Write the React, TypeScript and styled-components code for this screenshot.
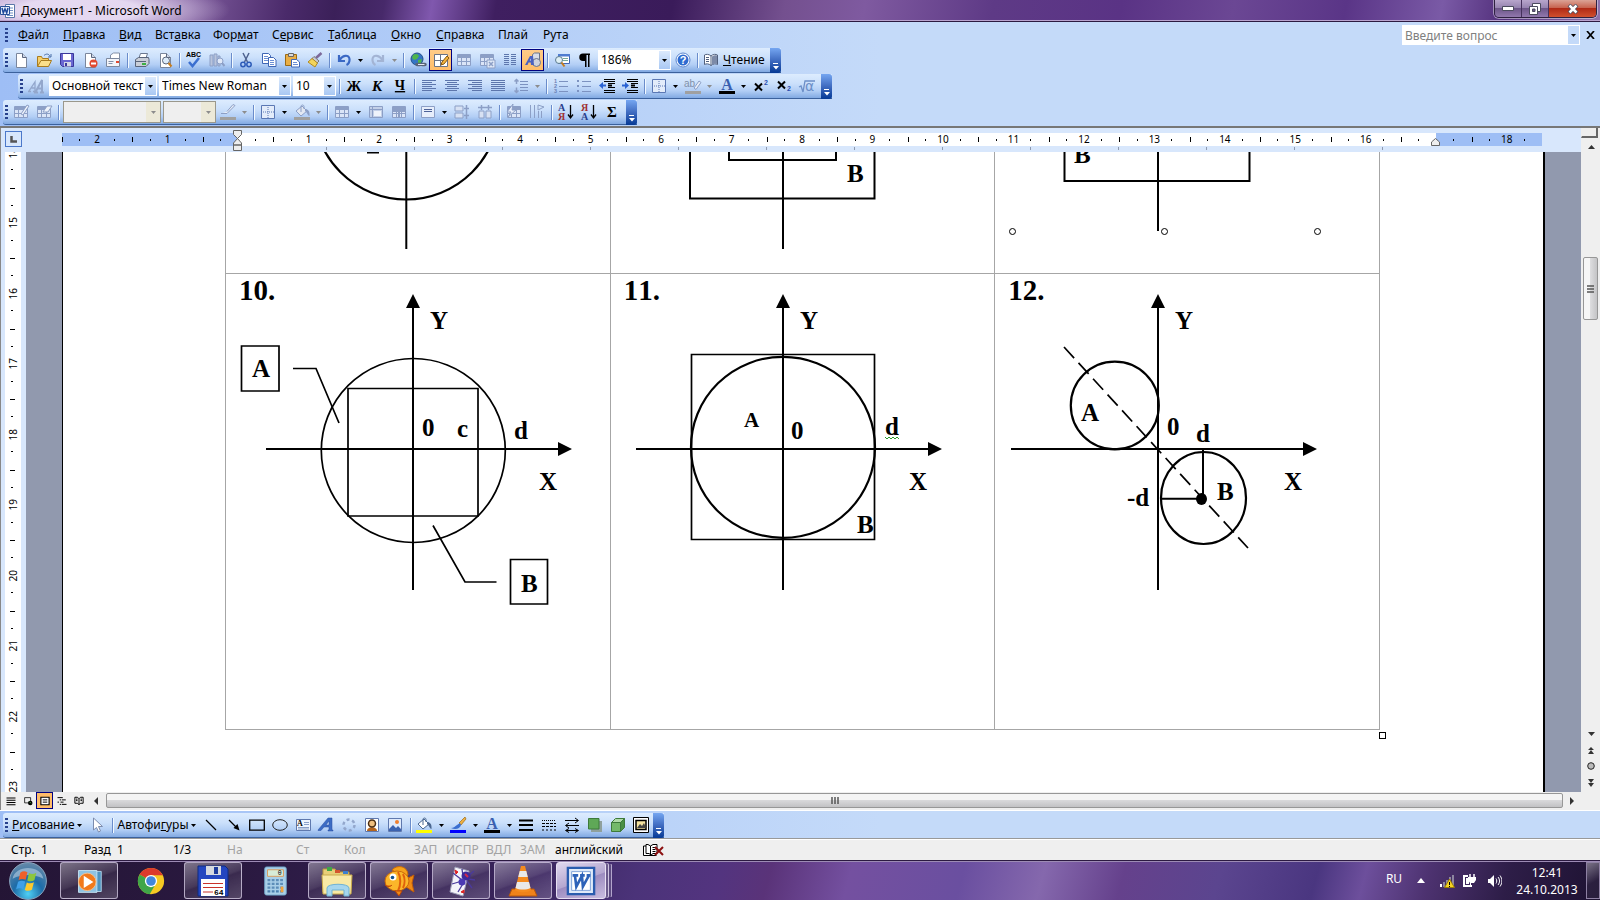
import React from 'react';
import styled, { createGlobalStyle, css } from 'styled-components';

const ui = '"Noto Sans", "Open Sans", sans-serif';

const Global = createGlobalStyle`
  * { box-sizing: border-box; }
  html, body, #root { height: 100%; }
  body { margin: 0; overflow: hidden; font: 12px/16px ${ui}; color: #000; background: #c4daf9; }
  button, select, input { font: inherit; color: inherit; margin: 0; padding: 0; border: 0; background: none; border-radius: 0; }
  svg { display: block; flex: none; }
`;

/* ---------- window frame ---------- */

const Window = styled.div`
  height: 100vh;
  display: flex;
  flex-direction: column;
`;

const TitleBar = styled.header`
  flex: none;
  height: 22px;
  display: flex;
  align-items: flex-start;
  padding-right: 3px;
  border-bottom: 1px solid #2c1a41;
  box-shadow: inset 0 -1px 0 #b9a3cf;
  background:
    radial-gradient(ellipse 150px 30px at 80px 10px, rgba(238, 228, 248, 0.9) 40%, rgba(238, 228, 248, 0) 100%),
    linear-gradient(100deg, #a284bd 0%, #7d5a9c 12%, #4a2a6a 18%, #3b2059 21%, #47296a 24%, #8058ae 27%, #3f1f60 31%, #3a1b5a 42%, #74508f 49%, #7f5aa0 54%, #5e3a86 62%, #5a3385 70%, #6b4794 77%, #5a3587 84%, #7a5aa6 90%, #53307c 94%, #8d74ae 100%);
`;

const Title = styled.h1`
  flex: 1;
  display: flex;
  align-items: center;
  gap: 5px;
  height: 21px;
  margin: 0;
  font-size: 12px;
  line-height: 20px;
  font-weight: 400;
`;

const CaptionGroup = styled.div`
  display: flex;
  height: 18px;
  border: 1px solid #2e2140;
  border-top: 0;
  border-radius: 0 0 5px 5px;
  overflow: hidden;
  box-shadow: 0 0 0 1px rgba(255, 255, 255, 0.45);
`;

const CaptionButton = styled.button<{ $close?: boolean }>`
  width: ${(p) => (p.$close ? 47 : 27)}px;
  display: grid;
  place-items: center;
  border-right: ${(p) => (p.$close ? 0 : '1px solid #45315c')};
  background: ${(p) =>
    p.$close
      ? 'linear-gradient(#dba396, #c76450 45%, #b02a16 50%, #d0502e 100%)'
      : 'linear-gradient(#b8a6cc, #9683b0 45%, #6d5689 50%, #9178ad 100%)'};
`;

/* ---------- menus and toolbars ---------- */

const CommandArea = styled.div`
  flex: none;
  background: linear-gradient(90deg, #9ebef5 0%, #c4daf9 55%);
  border-bottom: 2px solid #777;
`;

const MenuBar = styled.nav`
  display: flex;
  align-items: center;
  height: 26px;
  padding-left: 3px;
`;

const MenuItem = styled.button<{ $w: number }>`
  width: ${(p) => p.$w}px;
  height: 22px;
  text-align: left;
  white-space: nowrap;
`;

const Spacer = styled.div`
  flex: 1;
`;

const Grip = styled.span<{ $gap?: number }>`
  flex: none;
  width: 3px;
  height: 14px;
  margin: 0 ${(p) => p.$gap ?? 1}px 0 2px;
  background: repeating-linear-gradient(#27418d 0 2px, transparent 2px 4px);
`;

const ToolRow = styled.div<{ $indent?: boolean }>`
  display: flex;
  height: 26px;
  padding-left: ${(p) => (p.$indent ? 18 : 3)}px;
`;

const Bar = styled.div`
  display: flex;
  align-items: center;
  height: 25px;
  border-radius: 3px 0 0 3px;
  border-bottom: 1px solid #3b619c;
  background: linear-gradient(#ddecfe 0%, #cbe0fb 40%, #b2cef5 70%, #81a9e2 100%);
`;

const BarCap = styled.button<{ $gap: number }>`
  align-self: stretch;
  width: 11px;
  margin: 0 0 -1px ${(p) => p.$gap}px;
  border-radius: 0 3px 3px 0;
  display: grid;
  place-items: end center;
  padding-bottom: 3px;
  background: linear-gradient(#75a6f1, #3f6bc0 50%, #053995);
`;

const Tool = styled.button<{ $on?: boolean }>`
  flex: none;
  width: 23px;
  height: 22px;
  display: grid;
  place-items: center;
  ${(p) =>
    p.$on &&
    css`
      border: 1px solid #000080;
      background: linear-gradient(#fecb88, #ffbd69);
    `}
`;

const CloseDoc = styled.button`
  width: 20px;
  height: 20px;
  display: grid;
  place-items: center;
`;

const Drop = styled.button`
  flex: none;
  width: 11px;
  height: 22px;
  display: grid;
  place-items: center;
`;

const Sep = styled.span`
  flex: none;
  width: 6px;
  height: 15px;
  background: linear-gradient(90deg, transparent 3px, #6a8ccb 3px 4px, #f1f9ff 4px 5px, transparent 5px);
`;

const TextTool = styled.button<{ $menu?: boolean }>`
  display: flex;
  align-items: center;
  gap: ${(p) => (p.$menu ? 2 : 4)}px;
  height: 22px;
  padding: 0 ${(p) => (p.$menu ? 4 : 5)}px 0 3px;
  white-space: nowrap;
`;

const Combo = styled.label<{ $w: number; $off?: boolean }>`
  flex: none;
  width: ${(p) => p.$w}px;
  height: ${(p) => (p.$off ? 22 : 20)}px;
  margin-left: 2px;
  display: grid;
  align-items: center;
  background: ${(p) => (p.$off ? '#efefef' : '#fff')};
  border: ${(p) => (p.$off ? '1px solid #9a988c' : '0')};
  > * { grid-area: 1 / 1; }
  select { appearance: none; width: 100%; height: 18px; padding-left: 3px; outline: 0; opacity: 1; }
`;

const ComboArrow = styled.span<{ $off?: boolean }>`
  justify-self: end;
  width: ${(p) => (p.$off ? 14 : 11)}px;
  height: ${(p) => (p.$off ? 20 : 18)}px;
  margin-right: ${(p) => (p.$off ? 0 : 1)}px;
  display: grid;
  place-items: center;
  pointer-events: none;
  background: ${(p) => (p.$off ? '#ece9d8' : 'linear-gradient(#dceafd, #a9c8f3)')};
`;

const AskBox = styled.div`
  display: flex;
  align-items: center;
  width: 178px;
  height: 20px;
  padding-right: 1px;
  background: #fff;
  input { flex: 1; min-width: 0; height: 20px; padding-left: 3px; outline: 0; }
  input::placeholder { color: #808080; opacity: 1; }
  button { width: 11px; height: 18px; display: grid; place-items: center; background: #c4daf9; }
`;

/* ---------- rulers and document ---------- */

const Workspace = styled.main`
  flex: 1;
  min-height: 0;
  display: grid;
  grid-template-columns: 25px minmax(0, 1fr) 19px;
  grid-template-rows: 24px minmax(0, 1fr) 18px;
  border-left: 1px solid #888;
  background: #d8e7fc;
`;

const TabKind = styled.button`
  align-self: start;
  width: 17px;
  height: 16px;
  margin: 3px 0 0 4px;
  display: grid;
  place-items: center;
  border: 1px solid #4b78ca;
`;

const HRuler = styled.div`
  padding: 5px 39px 0 36px;
  overflow: hidden;
`;

const HScale = styled.div`
  display: grid;
  grid-template-columns: repeat(21, minmax(0, 1fr));
  height: 13px;
  background: linear-gradient(90deg, #9ebef5 11.9%, #fff 11.9% 92.85%, #9ebef5 92.85%);
  position: relative;
`;

const HCell = styled.span`
  display: flex;
  align-items: center;
  justify-content: center;
  font-size: 10px;
  line-height: 13px;
  background:
    linear-gradient(#000, #000) 25% 6px / 1px 2px no-repeat,
    linear-gradient(#000, #000) 75% 6px / 1px 2px no-repeat,
    linear-gradient(#000, #000) 0 4px / 1px 5px no-repeat;
`;

const TabMarks = styled.div`
  height: 3px;
  margin: 1px 159px 0 264px;
  background: repeating-linear-gradient(90deg, #8e9ab0 0 1px, transparent 1px 88px);
`;

const Indent = styled.span<{ $right?: boolean }>`
  position: absolute;
  top: ${(p) => (p.$right ? 5 : -3)}px;
  left: ${(p) => (p.$right ? '92.85%' : '11.9%')};
  margin-left: -5px;
`;

const VRuler = styled.div`
  margin: 0 5px 0 4px;
  background: #fff;
  overflow: hidden;
`;

const VScale = styled.div`
  display: grid;
  grid-template-rows: repeat(10, minmax(0, 1fr));
  height: 705px;
  margin-top: -35px;
`;

const VCell = styled.span`
  display: flex;
  align-items: center;
  justify-content: center;
  background:
    linear-gradient(#000, #000) 6px 25% / 2px 1px no-repeat,
    linear-gradient(#000, #000) 6px 75% / 2px 1px no-repeat,
    linear-gradient(#000, #000) 5px 0 / 5px 1px no-repeat;
  span { writing-mode: vertical-rl; transform: rotate(180deg); font-size: 10px; line-height: 14px; }
`;

const Desk = styled.section`
  background: #9199ae;
  padding: 0 36px;
  overflow: hidden;
`;

const Page = styled.article`
  height: 100%;
  padding: 0 163px 0 162px;
  border-left: 1px solid #000;
  border-right: 2px solid #000;
  background: #fff;
  overflow: hidden;
`;

const FigureTable = styled.table`
  width: 100%;
  table-layout: fixed;
  border-collapse: collapse;
  td { border: 1px solid #a6a6a6; border-top-width: 0; padding: 0; vertical-align: top; }
  tr:first-child td { height: 121px; }
  tr:last-child td { height: 456px; }
`;

const Figure = styled.div`
  display: grid;
  > * { grid-area: 1 / 1; }
  svg { width: 100%; }
  svg text { font: bold 25px "Liberation Serif", "Times New Roman", serif; fill: #000; }
`;

const FigureNo = styled.p`
  margin: 0;
  padding-left: 13px;
  font: bold 29px/32px "Liberation Serif", "Times New Roman", serif;
  font-kerning: none;
`;

const TableHandle = styled.span`
  display: block;
  width: 7px;
  height: 7px;
  margin: 2px -6px 0 auto;
  border: 1px solid #000;
`;

/* ---------- scroll bars ---------- */

const VBar = styled.div`
  grid-row: 1 / 4;
  grid-column: 3;
  display: flex;
  flex-direction: column;
  align-items: center;
  background: #efefef;
  padding-bottom: 18px;
`;

const SplitBox = styled.span`
  align-self: stretch;
  flex: none;
  height: 10px;
  margin-right: 2px;
  border: solid #666;
  border-left-color: #eee;
  border-width: 0 2px 2px 1px;
  background: #eee;
`;

const ScrollArrow = styled.button<{ $h: number }>`
  flex: none;
  width: 17px;
  height: ${(p) => p.$h}px;
  display: grid;
  place-items: center;
`;

const VTrack = styled.div`
  flex: 1;
  padding-top: 102px;
`;

const VThumb = styled.div`
  width: 15px;
  height: 63px;
  display: grid;
  place-items: center;
  border: 1px solid #979797;
  border-radius: 2px;
  background: linear-gradient(90deg, #f6f6f6 50%, #dcdcde 50%, #c4c4c6);
`;

const HBar = styled.div`
  grid-column: 1 / 3;
  display: flex;
  align-items: center;
  padding: 0 1px 1px 1px;
  background: #efefef;
`;

const ViewButton = styled.button<{ $on?: boolean }>`
  width: 17px;
  height: 17px;
  display: grid;
  place-items: center;
  border: ${(p) => (p.$on ? '1px solid #000080' : '0')};
  background: ${(p) => (p.$on ? '#ffbd69' : 'none')};
`;

const HThumb = styled.div`
  flex: 1;
  height: 15px;
  margin-left: 2px;
  display: grid;
  place-items: center;
  border: 1px solid #979797;
  border-radius: 2px;
  background: linear-gradient(#f4f4f4 45%, #d8d8da 50%, #c2c2c4);
`;

/* ---------- bottom bars ---------- */

const DrawingRow = styled.div`
  flex: none;
  display: flex;
  height: 29px;
  padding: 2px 0 0 3px;
  border-top: 1px solid #fff;
  border-bottom: 1px solid #999;
  background: linear-gradient(90deg, #9ebef5 0%, #c4daf9 55%);
`;

const StatusBar = styled.footer`
  flex: none;
  height: 21px;
  display: grid;
  grid-template-columns: 73px 89px 54px 69px 48px 70px 32px 40px 34px 35px 88px auto;
  align-items: center;
  padding-left: 11px;
  border-top: 1px solid #fff;
  background: #efefef;
  white-space: nowrap;
`;

const StatusItem = styled.span<{ $dim?: boolean }>`
  color: ${(p) => (p.$dim ? '#a3a3a3' : '#000')};
`;

const Taskbar = styled.nav`
  flex: none;
  height: 40px;
  display: flex;
  align-items: stretch;
  gap: 4px;
  border-top: 1px solid #2c1a41;
  box-shadow: inset 0 1px 0 #9d8bb5;
  background: linear-gradient(105deg, #241535 0%, #2a1940 15%, #38235a 32%, #4b3379 40%, #53347f 45%, #5a3379 48%, #7450a0 53%, #6a4fa0 60%, #8568ad 65%, #65418c 70%, #5b458f 76%, #4a3680 82%, #6d4f9c 85%, #4d3270 89%, #2d1d47 94%, #1e1232 100%);
`;

const StartButton = styled.button`
  width: 56px;
  display: grid;
  place-items: center;
`;

const TaskButton = styled.button<{ $open?: boolean; $active?: boolean }>`
  width: ${(p) => (p.$active ? 50 : 58)}px;
  margin: 1px 0;
  display: grid;
  place-items: center;
  border: 1px solid transparent;
  border-radius: 3px;
  ${(p) =>
    p.$open &&
    css`
      border-color: rgba(225, 215, 240, 0.7);
      background: linear-gradient(160deg, rgba(255, 255, 255, 0.4), rgba(255, 255, 255, 0.14) 48%, rgba(255, 255, 255, 0.08) 52%, rgba(255, 255, 255, 0.2));
    `}
  ${(p) =>
    p.$active &&
    css`
      border-color: #e8e0f2;
      background: linear-gradient(160deg, #e0d8ee, #b5a7d0 50%, #9d8cc0 52%, #c9bde0);
      box-shadow: 3px 0 0 -1px #6b5a8c, 4px 0 0 -1px #cfc4e0, 7px 0 0 -2px #5c4a80, 8px 0 0 -2px #b3a5cc;
    `}
`;

const Tray = styled.div`
  display: flex;
  align-items: center;
  color: #fff;
`;

const TrayButton = styled.button<{ $w: number }>`
  width: ${(p) => p.$w}px;
  height: 34px;
  display: grid;
  place-items: center;
`;

const Language = styled.button`
  width: 24px;
  height: 34px;
  padding-bottom: 4px;
`;

const Clock = styled.time`
  width: 78px;
  text-align: center;
  line-height: 17px;
`;

const ShowDesktop = styled.button`
  align-self: stretch;
  width: 14px;
  margin: 1px 0;
  border: 1px solid #8e80a3;
  background: linear-gradient(150deg, rgba(255, 255, 255, 0.4), rgba(255, 255, 255, 0.05) 55%);
`;

/* ---------- icons ---------- */

const G = '#8c9fc6';
const rows = (ys: number[], x1 = 1, x2 = 15, c = G, w = 1) =>
  ys.map((y) => <path key={y} d={`M${x1} ${y}.5H${x2}`} stroke={c} strokeWidth={w} />);
const serif = '"Liberation Serif", serif';

const gridIcon = (
  <>
    <path d="M1.5 2.5h13v11h-13z" fill="#dbe5f7" stroke={G} />
    <path d="M1 3h14v3H1z" fill={G} />
    <path d="M1 9.5h14M5.5 6v8M10.5 6v8" stroke={G} />
  </>
);

const doc = (
  <>
    <path d="M3.5 1.5h6l4 4v10h-10z" fill="#fff" stroke="#7a869c" />
    <path d="M9.5 1.5v4h4" fill="#cfd8e8" stroke="#5b6780" />
  </>
);

const letterBar = (c: string) => <path d="M0 13h16v3H0z" fill={c} />;

const bucket = (c: string, body: string, line: string) => (
  <>
    <path d="M2 7l6-5 5 5-6 5z" fill={body} stroke={line} />
    <path d="M7 8V2.500c0-2 3-2 3 0V5" fill="none" stroke={line} />
    <path d="M11 5c3 0 5 2 4.500 7-2-.5-2-3-4.500-5z" fill={line} />
    {letterBar(c)}
  </>
);

const icons: Record<string, React.ReactNode> = {
  word: (
    <>
      <path d="M5.500 1.500h9v13h-9z" fill="#fff" stroke="#5b77a8" />
      <path d="M9 5h4M9 7.500h4M9 10h4M7 12.500h6" stroke="#6f8fc4" />
      <path d="M.5 3.500h9v8h-9z" fill="#e8effb" stroke="#2a5298" />
      <path d="M2 5l1.300 5L5 6l1.700 4L8 5" fill="none" stroke="#1f4a9c" strokeWidth="1.500" />
    </>
  ),
  newDoc: doc,
  open: (
    <>
      <path d="M1.500 14V4.500h4l1 2h6V14z" fill="#f6cf6a" stroke="#a87b1e" />
      <path d="M1.500 14.500L5 8.500h10.500L12.500 14.500z" fill="#fbdf8a" stroke="#a87b1e" />
      <path d="M8 3.500c2-2 5-2 6 1m1-2.500v3h-3" fill="none" stroke="#4a6ea8" />
    </>
  ),
  save: (
    <>
      <path d="M1.500 1.500h13v13h-11l-2-2z" fill="#6a67d2" stroke="#39379a" />
      <path d="M4 2h8v6H4z" fill="#fff" />
      <path d="M5 10h7v4.500H5z" fill="#d5d8e6" />
      <path d="M6 11h2v3H6z" fill="#39379a" />
    </>
  ),
  permission: (
    <>
      {doc}
      <circle cx="11.500" cy="11.500" r="4" fill="#e2492f" />
      <path d="M9 11.500h5" stroke="#fff" strokeWidth="2" />
    </>
  ),
  mail: (
    <>
      <path d="M5.500 6V3l3-2h6v8h-3" fill="#fff" stroke="#8290a8" />
      <path d="M1.500 6.500h13v8h-13z" fill="#f3f5fa" stroke="#7c889e" />
      <path d="M3.500 9.500h5M3.500 11.500h4" stroke="#8290a8" />
      <path d="M11 9h3v2h-3z" fill="#e2492f" />
    </>
  ),
  print: (
    <>
      <path d="M5 6l1.500-4.500h7L12 6z" fill="#fff" stroke="#6b7890" />
      <path d="M1.500 7.500l3-2h10l.5 2v4l-3 3H1.500z" fill="#c9ced8" stroke="#59647a" />
      <path d="M2 9.500h10" stroke="#59647a" />
      <path d="M8 11h4v2H8z" fill="#3cb043" />
    </>
  ),
  preview: (
    <>
      {doc}
      <circle cx="9" cy="8.500" r="3.500" fill="#dcebfa" stroke="#59647a" />
      <path d="M11.500 11l3 3.500" stroke="#c77d1e" strokeWidth="2" />
    </>
  ),
  spell: (
    <>
      <text x="0" y="5" fontSize="7" fontWeight="700" fontFamily='"Liberation Sans"'>ABC</text>
      <path d="M3 10l3.500 4L13 6" fill="none" stroke="#3b6fd0" strokeWidth="2.500" />
    </>
  ),
  research: (
    <>
      <path d="M1 3h3v11H1zM5 2h3v12H5zM9 4h2v10H9z" fill="#b9c4dc" stroke={G} />
      <circle cx="11" cy="9" r="3" fill="#dfe8f8" stroke={G} />
      <path d="M13 11l2.500 3" stroke={G} strokeWidth="2" />
    </>
  ),
  cut: (
    <>
      <path d="M5 1l4.500 9M11 1L6.500 10" stroke="#4f6390" strokeWidth="1.500" />
      <circle cx="5" cy="12.500" r="2.200" fill="none" stroke="#2d5bb8" strokeWidth="1.500" />
      <circle cx="11" cy="12.500" r="2.200" fill="none" stroke="#2d5bb8" strokeWidth="1.500" />
    </>
  ),
  copy: (
    <>
      <path d="M1.500 1.500h6l2 2v8h-8z" fill="#fff" stroke="#3f66b5" />
      <path d="M3 4.500h4M3 6.500h4M3 8.500h4" stroke="#6c8fd4" />
      <path d="M7.500 5.500h5l2.500 2.500v6.500H7.500z" fill="#fff" stroke="#3f66b5" />
      <path d="M9 8.500h4M9 10.500h4M9 12.500h4" stroke="#6c8fd4" />
    </>
  ),
  paste: (
    <>
      <path d="M1.500 2.500h11v11h-11z" fill="#e9ae45" stroke="#9a6a16" />
      <path d="M4.500 1.500h5v3h-5z" fill="#d9d9d9" stroke="#666" />
      <path d="M7.500 7.500h5l3 2.500v5h-8z" fill="#fff" stroke="#3f66b5" />
      <path d="M9 10.500h4M9 12.500h5" stroke="#6c8fd4" />
    </>
  ),
  brush: (
    <>
      <path d="M14.500 1L9 6" stroke="#7c6a9a" strokeWidth="2.500" />
      <path d="M7 4.500l5 4.500-2 2-5-4.500z" fill="#c9ccd6" stroke="#777" />
      <path d="M5 6.500L1 10l7 5 2.500-4z" fill="#f2d45c" stroke="#b08a20" />
    </>
  ),
  undo: <path d="M3 3v6h6M3.500 8.500C6 3 13 2 13.500 7c.2 3-1 5-3 6" fill="none" stroke="#3a68c4" strokeWidth="2.200" />,
  redo: <path d="M13 3v6H7M12.500 8.500C10 3 3 2 2.500 7c-.2 3 1 5 3 6" fill="none" stroke="#a3b4d4" strokeWidth="2.200" />,
  globe: (
    <>
      <circle cx="7" cy="7" r="6" fill="#3576c4" stroke="#24508c" />
      <path d="M3 3c3-2 5-1 6 1L7 7l-3 1-2-2zM8 8l4-1-1 4-3 1z" fill="#4fb64a" />
      <path d="M7 12.500h3m2 0h3" stroke="#59647a" strokeWidth="3.500" strokeLinecap="round" />
      <path d="M8 12.500h6.500" stroke="#e5e9f2" />
    </>
  ),
  tablePen: (
    <>
      <path d="M1.500 2.500h13v12h-13z" fill="#fff" stroke="#6a7385" />
      <path d="M1.500 8.500h13M7.500 2.500v12" stroke="#6a7385" />
      <path d="M8 13l1-3 5-6 2 2-5 6z" fill="#f2b33e" stroke="#8a5a10" />
    </>
  ),
  table: gridIcon,
  tableX: (
    <>
      {gridIcon}
      <path d="M8 8h8v8H8z" fill="#dfe8f7" stroke={G} />
      <path d="M10 10l4 4m0-4l-4 4" stroke={G} strokeWidth="1.500" />
    </>
  ),
  columns: (
    <>
      {rows([2, 4, 6, 8, 10, 12], 2, 7, '#5d76ac')}
      {rows([2, 4, 6, 8, 10, 12], 9, 14, '#5d76ac')}
    </>
  ),
  drawing: (
    <>
      <path d="M7.500 2.500l2-1.500h5v7l-2 2h-5z" fill="#d8dde8" stroke="#68738a" />
      <circle cx="11.500" cy="10.500" r="4" fill="#cfd3de" stroke="#68738a" />
      <path d="M0 13L5 4h3l1 9H6l-.3-2.500H3.600L2.500 13z" fill="#4a61c0" />
      <path d="M4.800 8.500h1L5.600 6.500z" fill="#fff" />
    </>
  ),
  map: (
    <>
      <path d="M4.500 2.500h11v9h-11z" fill="#fff" stroke="#3f66b5" />
      <path d="M4 2h12v2.500H4z" fill="#4f7cd0" />
      <path d="M9 6.500h5M9 8.500h5" stroke="#7a9" />
      <circle cx="5" cy="8" r="3.500" fill="#dff0f5" stroke="#5a7a90" />
      <path d="M7.500 10.500l3 4" stroke="#c77d1e" strokeWidth="2" />
    </>
  ),
  pilcrow: <path d="M13 1.500H6a3.600 3.600 0 0 0 0 7.500h2v6h1.500V3H11v12h1.500V3H13z" />,
  help: (
    <>
      <circle cx="8" cy="8" r="7" fill="#fff" stroke="#5c86cf" />
      <circle cx="8" cy="8" r="5.500" fill="#2e6bd0" />
      <text x="8" y="12" fontSize="11" fontWeight="700" fill="#fff" textAnchor="middle" fontFamily='"Liberation Sans"'>?</text>
    </>
  ),
  read: (
    <>
      <path d="M8 4C6 2 3 2 1.500 3v9.500C3 11.500 6 11.500 8 13.500c2-2 5-2 6.500-1V3C13 2 10 2 8 4z" fill="#fff" stroke="#51607e" />
      <path d="M8 4v9.500M3 5.500h3M3 7.500h3M3 9.500h3" stroke="#51607e" />
      <path d="M9 4.500c2-1.500 4-1.500 5-1V12c-2-.5-4 0-5 1z" fill="#7c8aa8" />
    </>
  ),
  styles: (
    <g fill="none" stroke="#93a7cc">
      <path d="M0 13.500h3M5 13.500h3M1 13L7 4v9M3.500 10h3.500" strokeWidth="1.300" />
      <path d="M6 14.500h4M12 14.500h4M7.500 14L14 2v12M9.500 10.500H14" strokeWidth="2" />
    </g>
  ),
  bold: <text x="8" y="13" fontSize="15" fontWeight="700" textAnchor="middle" fontFamily={serif}>Ж</text>,
  italic: <text x="8" y="13" fontSize="15" fontWeight="700" fontStyle="italic" textAnchor="middle" fontFamily={serif}>К</text>,
  underline: <text x="8" y="12" fontSize="14" fontWeight="700" textDecoration="underline" textAnchor="middle" fontFamily={serif}>Ч</text>,
  left: <>{rows([2, 6, 10], 1, 15, '#5d76ac')}{rows([4, 8, 12], 1, 11, '#5d76ac')}</>,
  center: <>{rows([2, 6, 10], 1, 15, '#5d76ac')}{rows([4, 8, 12], 3, 13, '#5d76ac')}</>,
  right: <>{rows([2, 6, 10], 1, 15, '#5d76ac')}{rows([4, 8, 12], 5, 15, '#5d76ac')}</>,
  justify: <>{rows([2, 4, 6, 8, 10, 12], 1, 15, '#5d76ac')}</>,
  spacing: (
    <>
      {rows([3, 6, 9, 12], 7, 15, '#7c92c0')}
      <path d="M3.500 1v5M1.500 3.500l2-2 2 2M3.500 9.500v5M1.500 12.500l2 2 2-2" fill="none" stroke={G} strokeWidth="1.500" />
    </>
  ),
  numbers: (
    <>
      {rows([3, 8, 13], 6, 15, '#7c92c0')}
      <text fontSize="5.500" fontWeight="700" fill="#6b82b5" fontFamily='"Liberation Sans"'>
        <tspan x="1" y="5">1</tspan><tspan x="1" y="10">2</tspan><tspan x="1" y="15">3</tspan>
      </text>
    </>
  ),
  bullets: <>{rows([3, 8, 13], 6, 15, '#7c92c0')}<path d="M1 2h2v2H1zM1 7h2v2H1zM1 12h2v2H1z" fill="#7c92c0" /></>,
  outdent: <>{rows([1, 3, 12, 14], 5, 16, '#000')}{rows([5, 9], 9, 16, '#000')}<path d="M9 7.500h4" stroke="#000" strokeWidth="2" /><path d="M0 7.500l4-3.500v2.500h3v2H4V11z" fill="#2a63d4" /></>,
  indent: <>{rows([1, 3, 12, 14], 5, 16, '#000')}{rows([5, 9], 9, 16, '#000')}<path d="M9 7.500h4" stroke="#000" strokeWidth="2" /><path d="M7 7.500L3 4v2.500H0v2h3V11z" fill="#2a63d4" /></>,
  border: (
    <>
      <path d="M1.500 1.500h13v13h-13z" fill="#e3ecfa" stroke="#5b78b4" />
      <path d="M8 3v11M3 8h11" stroke="#5b78b4" strokeDasharray="1 1" />
    </>
  ),
  highlight: (
    <>
      <text x="-1" y="9" fontSize="10" fill="#8290a8" fontFamily='"Liberation Sans"'>ab</text>
      <path d="M9 10l5-7 2 1.500-5 7z" fill="#e8edf7" stroke={G} />
      {letterBar('#a0a0a0')}
    </>
  ),
  fontColor: (
    <>
      <text x="8" y="12" fontSize="16" fontWeight="700" fill="#3a5fb0" textAnchor="middle" fontFamily={serif}>A</text>
      {letterBar('#000')}
    </>
  ),
  sup: (
    <>
      <path d="M2 5.500l7 7M9 5.500l-7 7" stroke="#000" strokeWidth="2" />
      <text x="11" y="7" fontSize="7" fontWeight="700" fill="#2a4fb0" fontFamily='"Liberation Sans"'>2</text>
    </>
  ),
  sub: (
    <>
      <path d="M2 3.500l7 7M9 3.500l-7 7" stroke="#000" strokeWidth="2" />
      <text x="11" y="13" fontSize="7" fontWeight="700" fill="#2a4fb0" fontFamily='"Liberation Sans"'>2</text>
    </>
  ),
  sqrt: (
    <>
      <path d="M0 9l2-1 2 6L6 3h10" fill="none" stroke="#6c8fc8" strokeWidth="1.300" />
      <text x="6" y="13" fontSize="14" fill="#6c8fc8" fontFamily='"DejaVu Sans"'>α</text>
    </>
  ),
  drawTable: <>{gridIcon}<path d="M8 10l6-9 2 1-6 9z" fill="#eef3fb" stroke={G} /></>,
  eraser: <>{gridIcon}<path d="M7 8l4-6h5l-4 6z" fill="#eef3fb" stroke={G} /></>,
  pen: <><path d="M1 9.500h6l8-8-2-1-6 7" fill="#e8edf7" stroke={G} />{letterBar('#a0a0a0')}</>,
  fillOff: bucket('#a0a0a0', '#e3e8f2', G),
  merge: <><path d="M1.500 2.500h13v11h-13z" fill="#c3d0e8" stroke={G} /><path d="M1 5.500h14M4.500 2v12" stroke={G} /><path d="M6 7h7v5H6z" fill="#eef3fb" /></>,
  split: <>{gridIcon}<path d="M1 6h14v2H1zM7 7h2v7H7z" fill={G} /></>,
  cellAlign: <><path d="M1.500 2.500h13v11h-13z" fill="#e7eefb" stroke={G} />{rows([5, 7], 4, 12, '#4d6298')}</>,
  rowsEven: <><path d="M1 2h8v5H1zM1 9h8v5H1z" fill="#d7e1f3" stroke={G} /><path d="M12.500 1v14M10 4.500h5M10 11.500h5" stroke={G} strokeWidth="1.500" /></>,
  colsEven: <><path d="M2 7h5v7H2zM9 7h5v7H9z" fill="#d7e1f3" stroke={G} /><path d="M1 3.500h14M4.500 1v5M11.500 1v5" stroke={G} strokeWidth="1.500" /></>,
  autoFormat: <>{gridIcon}<path d="M7 0L1 8h4l-3 5 8-7H6z" fill="#e7eefb" stroke={G} /></>,
  textDir: <><path d="M1.500 1v13M5.500 1v13M9.500 7v7M12.500 7v7" stroke={G} /><path d="M9 1l6 2-6 3z" fill="none" stroke={G} /></>,
  sortAsc: (
    <>
      <text fontSize="10" fontWeight="700" fontFamily={serif}><tspan x="0" y="7" fill="#2a3f8c">А</tspan><tspan x="0" y="16" fill="#a03030">Я</tspan></text>
      <path d="M12.500 1v13M10 10.500l2.500 3.500 2.500-3.500" fill="none" stroke="#000" strokeWidth="1.300" />
    </>
  ),
  sortDesc: (
    <>
      <text fontSize="10" fontWeight="700" fontFamily={serif}><tspan x="0" y="7" fill="#a03030">Я</tspan><tspan x="0" y="16" fill="#2a3f8c">А</tspan></text>
      <path d="M12.500 1v13M10 10.500l2.500 3.500 2.500-3.500" fill="none" stroke="#000" strokeWidth="1.300" />
    </>
  ),
  sigma: <text x="8" y="13" fontSize="15" fontWeight="700" textAnchor="middle" fontFamily={serif}>Σ</text>,
  pointer: <path d="M4.500 1v12l3-2.500 2 4.500 2-1-2-4.500h4z" fill="#fff" stroke="#7c8cae" />,
  line: <path d="M3 3l10 10" stroke="#000" strokeWidth="1.300" />,
  arrow: <><path d="M3 3l7 7" stroke="#000" strokeWidth="1.300" /><path d="M13.500 13.500L7.500 11l4-4z" /></>,
  rect: <path d="M.7 3.200h14.600v10H.7z" fill="none" stroke="#000" strokeWidth="1.300" />,
  oval: <ellipse cx="8" cy="8" rx="7.300" ry="5.300" fill="none" stroke="#222" />,
  textBox: (
    <>
      <path d="M1.500 2.500h14v11h-14z" fill="#eef4fd" stroke="#5f79ae" />
      <text x="2" y="9" fontSize="8" fontWeight="700" fontFamily={serif}>A</text>
      <path d="M9 5.500h5M9 7.500h5M3 10.500h11M3 12h11" stroke="#8aa0c8" />
    </>
  ),
  wordArt: <path d="M0 13L10 1h4v12h1v1h-5v-1h1v-3H6l-3 3.500H0zM8 8h3V4z" fill="#3c6cc4" stroke="#2a4fa0" strokeWidth=".5" />,
  diagram: <circle cx="8" cy="8" r="5.500" fill="none" stroke="#93a7cc" strokeWidth="2.500" strokeDasharray="3 2.700" />,
  clip: (
    <>
      <path d="M1.500 1.500h13v13h-13z" fill="#fff" stroke="#5f79ae" />
      <path d="M3 14c0-5 10-5 10 0z" fill="#b5651d" />
      <circle cx="8" cy="6.500" r="3.500" fill="#f0c080" stroke="#4a2d12" strokeWidth="1.500" />
    </>
  ),
  picture: (
    <>
      <path d="M1.500 1.500h13v13h-13z" fill="#dfeafc" stroke="#5f79ae" />
      <circle cx="10" cy="5" r="2" fill="#f08030" />
      <path d="M2 12l4-4 3 3 2-2 3 3v2H2z" fill="#3b62b0" />
    </>
  ),
  fill: bucket('#ffff00', '#fff', '#4a668f'),
  lineColor: (
    <>
      <path d="M15 0L9 6l2 2 5-6z" fill="#f0b040" stroke="#9a6a16" strokeWidth=".7" />
      <path d="M10 6L7 8c-2 1-3 3-6 3 4 2 9 1 10-3z" fill="#3b6fd0" />
      {letterBar('#0000ff')}
    </>
  ),
  weight: <path d="M1 3.500h14M1 8h14M1 13h14" stroke="#000" strokeWidth="2.200" />,
  dashes: <><path d="M1 3.500h14" stroke="#000" strokeDasharray="1 1" /><path d="M1 6.500h14M1 9.500h14" stroke="#000" strokeDasharray="3 1" /><path d="M1 13h14" stroke="#000" strokeDasharray="2 2" /></>,
  arrows: <path d="M1 3.500h13M11 1l3.500 2.500L11 6M2 8.500h13M5 6L1.500 8.500 5 11M2 13.500h12M5 11.500l-3.500 2L5 15.500M11 11.500l3.500 2-3.500 2" fill="none" stroke="#000" />,
  shadow: <><path d="M4 4h11v11H4z" fill="#8fa09c" /><path d="M1.500 1.500h10.500v10.500H1.500z" fill="#5fa857" stroke="#3d7a3a" /></>,
  cube: <><path d="M1.500 5.500h9v9h-9z" fill="#74b96a" stroke="#3d7a3a" /><path d="M1.500 5.500l4-4h9l-4 4z" fill="#b0dba8" stroke="#3d7a3a" /><path d="M10.500 14.500v-9l4-4v9z" fill="#4a8f44" stroke="#3d7a3a" /></>,
  frame: (
    <>
      <path d="M.5.5h15v15H.5z" fill="#fff" stroke="#000" />
      <path d="M3 3.500h10v9H3z" fill="#f4e2a0" stroke="#000" strokeWidth="1.500" />
      <path d="M4 11l3-4 2 2 2-3 2 5z" fill="#444" />
    </>
  ),
  viewNormal: <path d="M2 4h12M2 7h12M2 10h12M2 13h12" stroke="#000" strokeWidth="1.500" />,
  viewWeb: <><path d="M3.500 3.500h8v7h-8z" fill="none" stroke="#000" /><circle cx="11" cy="10.500" r="3" fill="#000" /><path d="M10 9l2 2" stroke="#5c5" /></>,
  viewPrint: <><path d="M2.500 3h11v10h-11z" fill="#fff" stroke="#000" strokeWidth="1.500" /><path d="M5 6.500h6M5 9.500h6" stroke="#000" strokeWidth="1.300" /></>,
  viewOutline: <path d="M2 3.500h7M5 6.500h2M8 6.500h5M2 9.500h2M6 9.500h4M5 12.500h2M8 12.500h6" stroke="#000" strokeWidth="1.300" />,
  viewRead: <path d="M8 5L6 3H2.500v8H6l2 2 2-2h3.500V3H10zM8 5v8M4 5.500h2M4 7.500h2M10 5.500h2M10 7.500h2" fill="none" stroke="#000" strokeWidth="1.300" />,
};

const Icon = ({ name, size = 16 }: { name: string; size?: number }) => (
  <svg width={size} height={size} viewBox="0 0 16 16" overflow="visible" aria-hidden="true">
    {icons[name]}
  </svg>
);

const Caret = ({ off }: { off?: boolean }) => (
  <svg width="5" height="3" viewBox="0 0 5 3"><path d="M0 0h5L2.500 3z" fill={off ? '#8c8c8c' : '#000'} /></svg>
);

const Triangle = ({ d }: { d: string }) => (
  <svg width="8" height="8" viewBox="0 0 8 8"><path d={d} fill="#333" /></svg>
);

const Cap = ({ gap = 0 }: { gap?: number }) => (
  <BarCap $gap={gap} aria-label="Параметры панелей инструментов">
    <svg width="7" height="7" viewBox="0 0 7 7"><path d="M1 .5h5" stroke="#fff" /><path d="M1 3h6L4 6.500z" fill="#fff" /></svg>
  </BarCap>
);

/* A toolbar is listed as tokens: "|" separator, "v" or "v-" drop-down arrow, "*name" pressed button. */
const Tools = ({ list }: { list: string }) => (
  <>
    {list.split(' ').map((t, i) => {
      if (t === '|') return <Sep key={i} />;
      if (t === 'v' || t === 'v-') return <Drop key={i} aria-label="Ещё"><Caret off={t === 'v-'} /></Drop>;
      const on = t.startsWith('*');
      const name = on ? t.slice(1) : t;
      return <Tool key={i} $on={on} aria-label={name}><Icon name={name} /></Tool>;
    })}
  </>
);

const Select = ({ label, value, w, off }: { label: string; value: string; w: number; off?: boolean }) => (
  <Combo $w={w} $off={off}>
    <select aria-label={label} disabled={off}><option>{value}</option></select>
    <ComboArrow $off={off}><Caret off={off} /></ComboArrow>
  </Combo>
);

const Mnemonic = ({ text, at }: { text: string; at: number }) =>
  at < 0 ? <>{text}</> : <>{text.slice(0, at)}<u>{text[at]}</u>{text.slice(at + 1)}</>;

const menu: [string, number, number][] = [
  ['Файл', 0, 45], ['Правка', 0, 56], ['Вид', 0, 36], ['Вставка', 3, 58], ['Формат', 3, 59], ['Сервис', 1, 56],
  ['Таблица', 0, 63], ['Окно', 0, 45], ['Справка', 0, 62], ['Плай', -1, 45], ['Рута', -1, 40],
];

/* ---------- figures ---------- */

const Axes = ({ x }: { x: number }) => (
  <g stroke="#000" strokeWidth="2">
    <path d={`M${x} 300V589M${x - 147} 448H${x + 150}`} />
    <path d={`M${x} 293l7 14h-14zM${x + 159} 448l-14-7v14z`} stroke="none" />
    <text x={x + 17} y="328" stroke="none">Y</text>
    <text x={x + 126} y="489" stroke="none">X</text>
  </g>
);

const Fig = ({ x, y, h, no, children }: { x: number; y: number; h: number; no?: string; children: React.ReactNode }) => (
  <Figure>
    <svg height={h} viewBox={`${x} ${y} 384 ${h}`} preserveAspectRatio="xMinYMin slice" fill="#000">{children}</svg>
    {no && <FigureNo>{no}</FigureNo>}
  </Figure>
);

const outline = { fill: 'none', stroke: '#000' };

const Figures = () => (
  <FigureTable>
    <tbody>
      <tr>
        <td>
          <Fig x={226} y={152} h={120}>
            <circle cx="406.300" cy="106.500" r="93" {...outline} strokeWidth="2.200" />
            <path d="M406.300 152V249M367 152.500h12" {...outline} strokeWidth="2" />
          </Fig>
        </td>
        <td>
          <Fig x={610} y={152} h={120}>
            <path d="M689 140V198.500H873.500V140M728 140V160H835V140M782 140V249" {...outline} strokeWidth="2" />
            <text x="846" y="182">B</text>
          </Fig>
        </td>
        <td>
          <Fig x={995} y={152} h={120}>
            <path d="M1064.500 140V181H1249.500V140M1158 140V231" {...outline} strokeWidth="2" />
            <text x="1074" y="163">B</text>
            {[1012.5, 1164.5, 1317.5].map((cx) => (
              <circle key={cx} cx={cx} cy="231.500" r="3" fill="#fff" stroke="#000" />
            ))}
          </Fig>
        </td>
      </tr>
      <tr>
        <td>
          <Fig x={226} y={273} h={455} no="10.">
            <Axes x={413} />
            <circle cx="413.300" cy="449.500" r="92" {...outline} strokeWidth="1.700" />
            <path d="M348 387.500h130v127.500h-130zM241.500 345h37.500v45h-37.500zM510.500 558.500h37v44.500h-37z" {...outline} strokeWidth="1.700" />
            <path d="M293 367.500h23l23 54.500M433 524.500l32 56.500h31.500" {...outline} strokeWidth="1.700" />
            <text x="252" y="376">A</text>
            <text x="521" y="591">B</text>
            <text x="422" y="435">0</text>
            <text x="457" y="436">c</text>
            <text x="514" y="438">d</text>
          </Fig>
        </td>
        <td>
          <Fig x={610} y={273} h={455} no="11.">
            <Axes x={782} />
            <path d="M690.500 353.500h183v185h-183z" {...outline} strokeWidth="1.700" />
            <ellipse cx="782" cy="446.300" rx="92" ry="90.500" {...outline} strokeWidth="2.200" />
            <text x="743" y="425.500" style={{ fontSize: 21 }}>A</text>
            <text x="790" y="438">0</text>
            <text x="884" y="434">d</text>
            <path d="M884 436l2 2 2-2 2 2 2-2 2 2 2-2 2 2" fill="none" stroke="#2a9a2a" />
            <text x="856" y="532">B</text>
          </Fig>
        </td>
        <td>
          <Fig x={995} y={273} h={455} no="12.">
            <Axes x={1158} />
            <ellipse cx="1114.800" cy="404.500" rx="44" ry="43.800" {...outline} strokeWidth="2.200" />
            <ellipse cx="1203.500" cy="497" rx="42.500" ry="46" {...outline} strokeWidth="2.200" />
            <path d="M1064 346L1248 547" {...outline} strokeWidth="1.700" strokeDasharray="15 6.500" />
            <path d="M1203 448v50M1161 497.800h41" {...outline} strokeWidth="2" />
            <ellipse cx="1201.500" cy="498" rx="5.500" ry="6" />
            <text x="1081" y="420">A</text>
            <text x="1167" y="434">0</text>
            <text x="1196" y="441">d</text>
            <text x="1127" y="505">-d</text>
            <text x="1217" y="499">B</text>
          </Fig>
        </td>
      </tr>
    </tbody>
  </FigureTable>
);

/* ---------- taskbar pictures ---------- */

const Pic = ({ children, s = 32 }: { children: React.ReactNode; s?: number }) => (
  <svg width={s} height={s} viewBox="0 0 32 32" aria-hidden="true">{children}</svg>
);

const orb = (
  <Pic s={38}>
    <defs>
      <radialGradient id="orb" cx="50%" cy="85%" r="80%"><stop offset="0" stopColor="#4fd0f5" /><stop offset=".5" stopColor="#1d6ca8" /><stop offset="1" stopColor="#5f86a8" /></radialGradient>
    </defs>
    <circle cx="16" cy="16" r="15.500" fill="url(#orb)" stroke="#8fa9c2" strokeWidth=".8" />
    <path d="M3 14C5 2 27 2 29 14c-8-4-18-4-26 0z" fill="#cfe0ee" opacity=".5" />
    <path d="M9.500 9c2-1.500 4-1.500 6-.3L14 15c-2-1-4-1-6 .3z" fill="#f0602a" />
    <path d="M16.800 9.300c2 1 4 1 6.200-.3l-1.600 6.300c-2 1.200-4 1.200-6 .2z" fill="#8cc63e" />
    <path d="M7.600 16.700c2-1.300 4-1.300 6-.2L12 23c-2-1.200-4-1.200-6 0z" fill="#3fa0e8" />
    <path d="M15 17.200c2 1 4 1 6-.2l-1.700 6.300c-2 1.200-4 1.200-6 .2z" fill="#fcc92d" />
  </Pic>
);

const player = (
  <Pic s={28}>
    <path d="M8 5h22v23H8z" fill="#4f93bf" stroke="#b8dcf0" /><path d="M4 4h21v25H4z" fill="#8fc3e2" stroke="#c9e6f5" />
    <circle cx="14" cy="17" r="10" fill="#f27a1c" stroke="#f9c08a" /><path d="M10 10l11 7-11 7z" fill="#fff" />
  </Pic>
);

const chrome = (
  <Pic s={28}>
    <circle cx="16" cy="16" r="15" fill="#f6c922" />
    <path d="M16 16L3 8.500A15 15 0 0 1 29.500 9.500H16z" fill="#dc3a2c" />
    <path d="M3 8.500A15 15 0 0 0 14.500 31L21 20l-5-4z" fill="#3fa648" />
    <circle cx="16" cy="16" r="7" fill="#fff" /><circle cx="16" cy="16" r="5.500" fill="#4287dc" />
  </Pic>
);

const floppy = (
  <Pic>
    <path d="M1 1h27l3 3v27H1z" fill="#2446c0" stroke="#0f2a80" />
    <path d="M9 1h15v9H9z" fill="#d6d9e0" /><path d="M17 2h4v7h-4z" fill="#1d3a9c" />
    <path d="M4 14h24v17H4z" fill="#fff" /><path d="M6 18.500h20M6 22.500h20M6 27h10" stroke="#c8322a" strokeWidth="1.200" />
    <text x="17" y="30" fontSize="8" fontWeight="700" fontFamily='"Liberation Mono"'>64</text>
  </Pic>
);

const calc = (
  <Pic s={30}>
    <rect x="5" y="1" width="23" height="30" rx="2" fill="#a9cfe8" stroke="#6fa3c8" />
    <path d="M8 4h17v7H8z" fill="#d7ecd8" stroke="#d99a5a" />
    <text x="19" y="10" fontSize="7" fontFamily='"Liberation Mono"'>0</text>
    {[14, 18, 22, 26].map((y) => <path key={y} d={`M8 ${y + 1}h17`} stroke={y === 26 ? '#4a7fae' : '#5c8db8'} strokeWidth="2.500" strokeDasharray="3 1.500" />)}
    <path d="M22 22h3v6h-3z" fill="#f2a33c" />
  </Pic>
);

const folder = (
  <Pic>
    <path d="M2 4h12l2 3h12v20H2z" fill="#e8cf78" stroke="#b99a3a" /><path d="M6 2h5v4H6z" fill="#3fa648" /><path d="M14 5h5v3h-5z" fill="#d4552f" /><path d="M22 6h5v3h-5z" fill="#3a7fd0" />
    <path d="M1 10h30l-1 19H2z" fill="#f8e9a6" stroke="#c9ab4c" />
    <path d="M6 31v-8c0-5 22-5 22 0v8h-5v-6H11v6z" fill="#a6d6ee" stroke="#6fb2d4" />
  </Pic>
);

const fish = (
  <Pic>
    <path d="M9 5C14-1 25 1 25 10l-4 2z" fill="#f7a21b" stroke="#c96a0a" /><path d="M23 14l8-4-2 8 2 9-8-5z" fill="#f08a14" stroke="#c05c08" />
    <ellipse cx="14" cy="16" rx="12" ry="10" fill="#fbb62a" stroke="#c96a0a" /><path d="M15 7c3 5 3 13 0 19M20 9c2 4 2 10 0 14" fill="none" stroke="#e0610c" strokeWidth="2" />
    <circle cx="10" cy="12" r="3.500" fill="#fff" /><circle cx="9.500" cy="12.500" r="1.800" fill="#12508c" /><path d="M2 20c3 2 5 2 7 0M12 26l4 5 3-5z" stroke="#b5420a" fill="#f08a14" />
  </Pic>
);

const spider = (
  <Pic>
    <path d="M10 2l14 4-6 25L5 27z" fill="#f4f4fa" stroke="#9a9ab5" /><path d="M10 5l3 2-2 2zM16 27l3-2v3z" fill="#d22" stroke="#d22" />
    <path d="M17 15L8 8M17 16l-10 3M19 17l-6 10M22 12l7-6M23 14l7 1M22 16l5 7M18 11l-1-7" stroke="#4a3a9c" strokeWidth="1.300" />
    <circle cx="21" cy="11" r="4.500" fill="#3c2a9a" /><circle cx="17" cy="17" r="3.500" fill="#4a3ab4" /><path d="M20 9l3 3" stroke="#d02a4a" strokeWidth="2" />
  </Pic>
);

const cone = (
  <Pic>
    <path d="M5 24h22l3 7H2z" fill="#f0821a" stroke="#b8560a" /><path d="M14 1h4l6 24c-3 3-13 3-16 0z" fill="#f58b1f" />
    <path d="M12.700 6h6.600l1.500 6h-9.600zM10 17h12l1.500 6c-4 2-11 2-15 0z" fill="#e9e9e9" />
  </Pic>
);

const wordTask = (
  <Pic s={30}>
    <path d="M2 2h28v28H2z" fill="#dfeaf9" stroke="#2a5cae" strokeWidth="2.500" /><path d="M6 6h20v20H6z" fill="#fff" stroke="#7ba0d8" />
    <path d="M7 10h6M15 10h5M22 10h4M9.500 10l1.500 12L17 10.500 18 22l6.500-12" fill="none" stroke="#2d62b8" strokeWidth="2.800" />
  </Pic>
);

const App = () => (
  <Window>
    <Global />
    <TitleBar>
      <Title><Icon name="word" />Документ1 - Microsoft Word</Title>
      <CaptionGroup>
        <CaptionButton aria-label="Свернуть"><svg width="12" height="5"><path d="M.5.5h11v4H.5z" fill="#fff" stroke="#4b4b5e" /></svg></CaptionButton>
        <CaptionButton aria-label="Восстановить">
          <svg width="12" height="12"><path d="M3.500.5h8v8h-8z" fill="#fff" stroke="#4b4b5e" /><path d="M.5 3.500h8v8h-8z" fill="#fff" stroke="#4b4b5e" /><path d="M3.500 6h2.500v2.500H3.500z" fill="#6d5689" stroke="#4b4b5e" /></svg>
        </CaptionButton>
        <CaptionButton $close aria-label="Закрыть">
          <svg width="12" height="10"><path d="M2 1l8 8M10 1L2 9" stroke="#4b4b5e" strokeWidth="4" /><path d="M2.500 1.500l7 7M9.500 1.500l-7 7" stroke="#fff" strokeWidth="2.500" /></svg>
        </CaptionButton>
      </CaptionGroup>
    </TitleBar>

    <CommandArea>
      <MenuBar>
        <Grip $gap={10} />
        {menu.map(([t, at, w]) => <MenuItem key={t} $w={w}><Mnemonic text={t} at={at} /></MenuItem>)}
        <Spacer />
        <AskBox>
          <input aria-label="Введите вопрос" placeholder="Введите вопрос" />
          <button aria-label="Список вопросов"><Caret /></button>
        </AskBox>
        <CloseDoc aria-label="Закрыть документ"><svg width="9" height="8"><path d="M1 0l7 8M8 0L1 8" stroke="#000" strokeWidth="1.700" /></svg></CloseDoc>
      </MenuBar>

      <ToolRow>
        <Bar>
          <Grip />
          <Tools list="newDoc open save permission mail | print preview | spell research | cut copy paste brush | undo v redo v- | globe *tablePen table tableX columns *drawing | map pilcrow" />
          <Select label="Масштаб" value="186%" w={73} />
          <Tools list="help |" />
          <TextTool><Icon name="read" /><span><Mnemonic text="Чтение" at={0} /></span></TextTool>
          <Cap />
        </Bar>
      </ToolRow>
      <ToolRow $indent>
        <Bar>
          <Grip />
          <Tools list="styles" />
          <Select label="Стиль" value="Основной текст" w={108} />
          <Select label="Шрифт" value="Times New Roman" w={132} />
          <Select label="Размер шрифта" value="10" w={43} />
          <Tools list="| bold italic underline | left center right justify spacing v- | numbers bullets outdent indent | border v highlight v- fontColor v sup sub sqrt" />
          <Cap gap={3} />
        </Bar>
      </ToolRow>
      <ToolRow>
        <Bar>
          <Grip />
          <Tools list="drawTable eraser |" />
          <Select label="Тип линии" value="" w={98} off />
          <Select label="Толщина линии" value="" w={53} off />
          <Tools list="pen v- | border v fillOff v- | table v merge split | cellAlign v rowsEven colsEven | autoFormat textDir | sortAsc sortDesc sigma" />
          <Cap gap={3} />
        </Bar>
      </ToolRow>
    </CommandArea>

    <Workspace>
      <TabKind aria-label="Тип табуляции"><svg width="7" height="7"><path d="M1.500 0v5.500H7" fill="none" stroke="#555" strokeWidth="2.500" /></svg></TabKind>
      <HRuler>
        <HScale>
          {Array.from({ length: 21 }, (_, i) => i - 2).map((n) => (
            <HCell key={n}>{n === 0 || n === 17 ? '' : Math.abs(n)}</HCell>
          ))}
          <Indent>
            <svg width="9" height="21"><path d="M.5.5h8v4l-4 4-4-4zM.5 15v-2l4-4.500 4 4.500v2zM.5 15h8v5.500h-8z" fill="#eee" stroke="#666" /></svg>
          </Indent>
          <Indent $right><svg width="9" height="8"><path d="M.5 7.500V4l4-3.500 4 3.500v3.500z" fill="#eee" stroke="#666" /></svg></Indent>
        </HScale>
        <TabMarks />
      </HRuler>
      <VBar>
        <SplitBox />
        <ScrollArrow $h={17} aria-label="Вверх"><Triangle d="M1 6l3.500-4L8 6z" /></ScrollArrow>
        <VTrack>
          <VThumb><svg width="7" height="8"><path d="M0 1h7M0 4h7M0 7h7" stroke="#555" strokeWidth="1.500" /></svg></VThumb>
        </VTrack>
        <ScrollArrow $h={17} aria-label="Вниз"><Triangle d="M1 2h7L4.500 6z" /></ScrollArrow>
        <ScrollArrow $h={16} aria-label="Предыдущая страница"><Triangle d="M1 4l3-3 3 3zM1 8l3-4 3 4z" /></ScrollArrow>
        <ScrollArrow $h={16} aria-label="Выбор объекта перехода"><svg width="8" height="8"><circle cx="4" cy="4" r="3.300" fill="#bbb" stroke="#222" /></svg></ScrollArrow>
        <ScrollArrow $h={18} aria-label="Следующая страница"><Triangle d="M1 0l3 4 3-4zM1 4l3 4 3-4z" /></ScrollArrow>
      </VBar>
      <VRuler>
        <VScale>
          {Array.from({ length: 10 }, (_, i) => <VCell key={i}><span>{14 + i}</span></VCell>)}
        </VScale>
      </VRuler>
      <Desk>
        <Page>
          <Figures />
          <TableHandle />
        </Page>
      </Desk>
      <HBar>
        {['viewNormal', 'viewWeb', 'viewPrint', 'viewOutline', 'viewRead'].map((v) => (
          <ViewButton key={v} $on={v === 'viewPrint'} aria-label={v}><Icon name={v} size={12} /></ViewButton>
        ))}
        <ScrollArrow $h={17} aria-label="Влево"><Triangle d="M6 0v8L2 4z" /></ScrollArrow>
        <HThumb><svg width="8" height="7"><path d="M1 0v7M4 0v7M7 0v7" stroke="#555" strokeWidth="1.500" /></svg></HThumb>
        <ScrollArrow $h={17} aria-label="Вправо"><Triangle d="M2 0v8l4-4z" /></ScrollArrow>
      </HBar>
    </Workspace>

    <DrawingRow>
      <Bar>
        <Grip />
        <TextTool $menu><span><Mnemonic text="Рисование" at={0} /></span><Caret /></TextTool>
        <Tools list="pointer |" />
        <TextTool $menu><span><Mnemonic text="Автофигуры" at={6} /></span><Caret /></TextTool>
        <Tools list="line arrow rect oval textBox wordArt diagram clip picture | fill v lineColor v fontColor v weight dashes arrows shadow cube frame" />
        <Cap />
      </Bar>
    </DrawingRow>

    <StatusBar>
      <StatusItem>Стр.&nbsp; 1</StatusItem>
      <StatusItem>Разд&nbsp; 1</StatusItem>
      <StatusItem>1/3</StatusItem>
      {['На', 'Ст', 'Кол', 'ЗАП', 'ИСПР', 'ВДЛ', 'ЗАМ'].map((s) => <StatusItem key={s} $dim>{s}</StatusItem>)}
      <StatusItem>английский</StatusItem>
      <svg width="21" height="13" viewBox="0 0 21 13"><path d="M7.500 2L5 .5H3v9h3l2 1.500 2-1.500h4v-9h-4zM7.500 2v9M3 2H.5v9.500h13M9.500 3.500h3M9.500 5.500h3M9.500 7.500h3" fill="#fff" stroke="#000" /><path d="M12 3l8 8M20 3l-8 8" stroke="#8c1010" strokeWidth="2" /></svg>
    </StatusBar>

    <Taskbar>
      <StartButton aria-label="Пуск">{orb}</StartButton>
      <TaskButton $open aria-label="Проигрыватель">{player}</TaskButton>
      <TaskButton aria-label="Chrome">{chrome}</TaskButton>
      <TaskButton $open aria-label="Файловый менеджер">{floppy}</TaskButton>
      <TaskButton aria-label="Калькулятор">{calc}</TaskButton>
      <TaskButton $open aria-label="Проводник">{folder}</TaskButton>
      <TaskButton $open aria-label="Рыбка">{fish}</TaskButton>
      <TaskButton $open aria-label="Паук">{spider}</TaskButton>
      <TaskButton $open aria-label="VLC">{cone}</TaskButton>
      <TaskButton $active aria-label="Word">{wordTask}</TaskButton>
      <Spacer />
      <Tray>
        <Language>RU</Language>
        <TrayButton $w={30} aria-label="Скрытые значки"><svg width="8" height="5"><path d="M0 5l4-5 4 5z" fill="#fff" /></svg></TrayButton>
        <TrayButton $w={22} aria-label="Сеть">
          <svg width="16" height="14"><path d="M1 10h2v3H1z" fill="#fff" /><path d="M4 8h2v5H4zM7 6h2v7H7zM10 3h2v10h-2zM13 1h2v12h-2z" fill="#8d86a0" /><path d="M10.500 5l5 8.500h-10z" fill="#f7d322" stroke="#9a7d08" /><path d="M10.500 8v3M10.500 12v1" stroke="#000" /></svg>
        </TrayButton>
        <TrayButton $w={22} aria-label="Питание">
          <svg width="15" height="15"><path d="M1 2h5v2H3v8h7v2H1zM4 5h3v6H4z" fill="#fff" /><path d="M8 1v4M12 1v4" stroke="#fff" strokeWidth="1.500" /><path d="M6 4h8v3l-2 3H9v4H8v-4L6 7z" fill="#fff" /></svg>
        </TrayButton>
        <TrayButton $w={28} aria-label="Громкость">
          <svg width="15" height="14"><path d="M1 5h2l4-4v12L3 9H1z" fill="#fff" /><path d="M9 4.500c1 1.500 1 3.500 0 5M11 3c2 2.500 2 5.500 0 8M13 1.500c2.500 3.500 2.500 7.500 0 11" fill="none" stroke="#fff" /></svg>
        </TrayButton>
        <Clock>12:41<br />24.10.2013</Clock>
        <ShowDesktop aria-label="Показать рабочий стол" />
      </Tray>
    </Taskbar>
  </Window>
);

export default App;
